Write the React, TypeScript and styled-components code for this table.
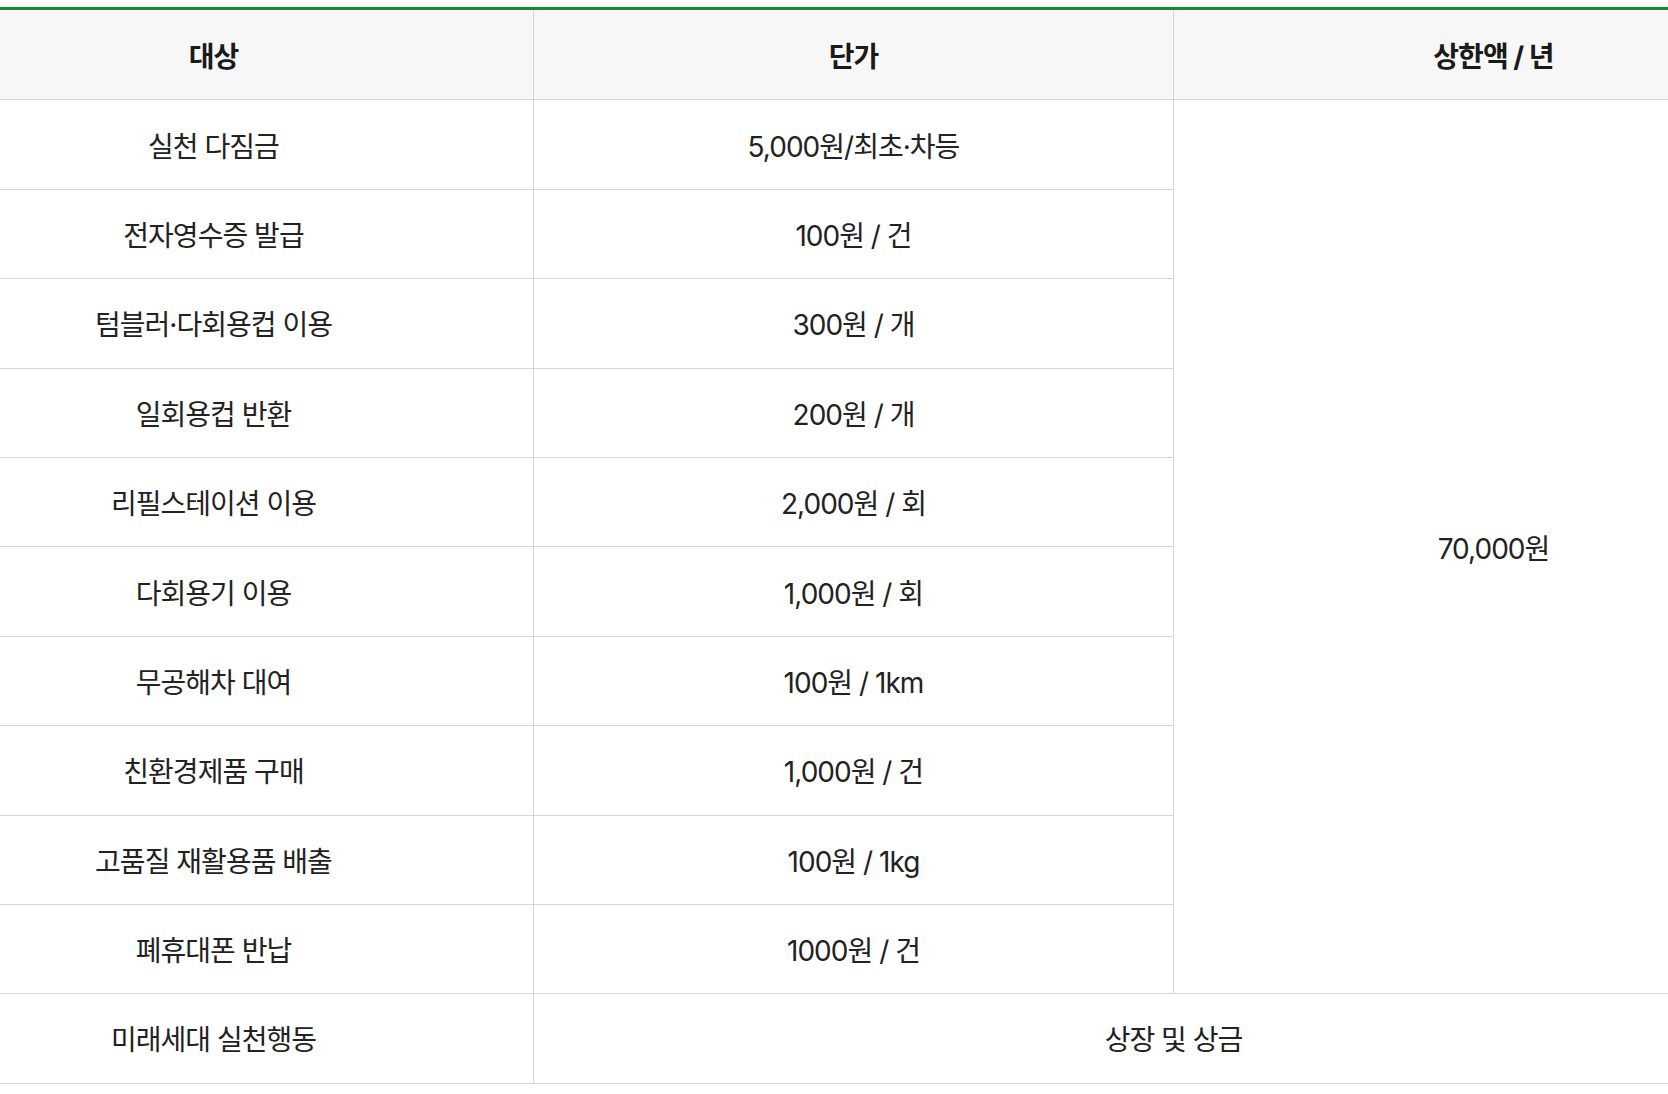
import React from 'react';
import styled, { createGlobalStyle } from 'styled-components';

const GlobalStyle = createGlobalStyle`
  html, body {
    margin: 0;
    padding: 0;
    background: #ffffff;
    overflow: hidden;
  }
  body {
    font-family: Inter, "Noto Sans CJK KR", sans-serif;
    color: #222222;
  }
`;

const Viewport = styled.div`
  width: 1668px;
  height: 1094px;
  overflow: hidden;
  padding-top: 7px;
  box-sizing: border-box;
`;

const Table = styled.table`
  width: 1920px;
  margin-left: -107px;
  border-collapse: collapse;
  table-layout: fixed;
  border-top: 3px solid #138a2c;
`;

const HeadCell = styled.th`
  height: 89.4px;
  padding: 0;
  background-color: #f7f7f7;
  border: 1px solid #d6d6d6;
  border-top: none;
  font-size: 28px;
  font-weight: 700;
  letter-spacing: -0.035em;
  color: #1a1a1a;
  text-align: center;
  vertical-align: middle;
`;

const Cell = styled.td`
  height: 88.4px;
  padding: 0;
  border: 1px solid #d6d6d6;
  font-size: 28px;
  font-weight: 400;
  letter-spacing: -0.035em;
  color: #222222;
  text-align: center;
  vertical-align: middle;
`;

type Item = { target: string; price: string };

const items: Item[] = [
  { target: '실천 다짐금', price: '5,000원/최초·차등' },
  { target: '전자영수증 발급', price: '100원 / 건' },
  { target: '텀블러·다회용컵 이용', price: '300원 / 개' },
  { target: '일회용컵 반환', price: '200원 / 개' },
  { target: '리필스테이션 이용', price: '2,000원 / 회' },
  { target: '다회용기 이용', price: '1,000원 / 회' },
  { target: '무공해차 대여', price: '100원 / 1km' },
  { target: '친환경제품 구매', price: '1,000원 / 건' },
  { target: '고품질 재활용품 배출', price: '100원 / 1kg' },
  { target: '폐휴대폰 반납', price: '1000원 / 건' },
];

const App: React.FC = () => {
  return (
    <>
      <GlobalStyle />
      <Viewport>
        <Table>
          <colgroup>
            <col style={{ width: '640px' }} />
            <col style={{ width: '640px' }} />
            <col style={{ width: '640px' }} />
          </colgroup>
          <thead>
            <tr>
              <HeadCell>대상</HeadCell>
              <HeadCell>단가</HeadCell>
              <HeadCell>상한액 / 년</HeadCell>
            </tr>
          </thead>
          <tbody>
            {items.map((item, index) => (
              <tr key={index}>
                <Cell>{item.target}</Cell>
                <Cell>{item.price}</Cell>
                {index === 0 && <Cell rowSpan={items.length}>70,000원</Cell>}
              </tr>
            ))}
            <tr>
              <Cell>미래세대 실천행동</Cell>
              <Cell colSpan={2}>상장 및 상금</Cell>
            </tr>
          </tbody>
        </Table>
      </Viewport>
    </>
  );
};

export default App;
